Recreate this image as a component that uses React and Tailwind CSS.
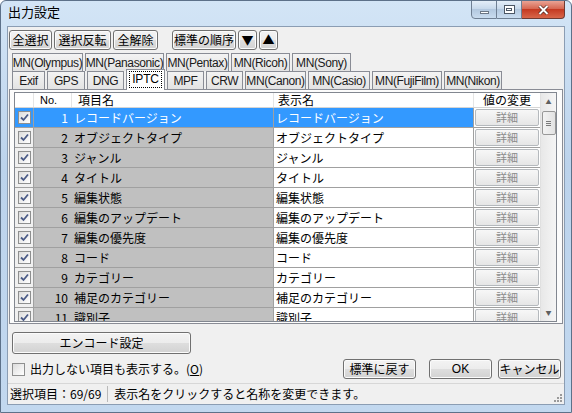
import React from "react";

const F = { fontFamily: '"Noto Sans CJK JP", "Noto Sans", sans-serif' };
const L = { fontFamily: '"Liberation Sans", "Noto Sans CJK JP", sans-serif' };

function Btn({ w, h = 20, children, className = "", style }) {
  return (
    <div
      className={`flex items-center justify-center border border-[#707070] rounded-[3px] bg-[linear-gradient(#f3f3f3_0%,#ececec_50%,#dedede_50%,#d2d2d2_100%)] text-[12px] text-black leading-none shadow-[inset_0_0_0_1px_#fbfbfb] ${className}`}
      style={{ width: w, height: h, ...style }}
    >
      {children}
    </div>
  );
}

function Check({ checked = true }) {
  return (
    <div className="w-[13px] h-[13px] border border-[#8e8f8f] bg-[linear-gradient(135deg,#dcdcdc,#ffffff)] flex items-center justify-center shrink-0">
      {checked && (
        <svg width="9" height="9" viewBox="0 0 9 9">
          <path d="M1 4.5 L3.5 7 L8 1.5" fill="none" stroke="#4a5a86" strokeWidth="1.8" />
        </svg>
      )}
    </div>
  );
}

function Tab({ w, children, selected }) {
  if (selected) {
    return (
      <div
        className="h-[21px] -mt-[3px] -mb-px relative z-10 border border-b-0 border-[#898c95] bg-white flex items-start justify-center pt-[1px] text-[12px] leading-none tracking-[-0.2px]"
        style={{ ...L, width: w }}
      >
        <span className="border border-dotted border-black px-[2px] pt-[1px] pb-[2px]">{children}</span>
      </div>
    );
  }
  return (
    <div
      className="h-[18px] border border-b-0 border-[#898c95] bg-[linear-gradient(#f3f3f3,#e3e3e3)] flex items-center justify-center text-[12px] leading-none text-[#1a1a1a] tracking-[-0.4px]"
      style={{ ...L, width: w }}
    >
      {children}
    </div>
  );
}

const rows = [
  "レコードバージョン",
  "オブジェクトタイプ",
  "ジャンル",
  "タイトル",
  "編集状態",
  "編集のアップデート",
  "編集の優先度",
  "コード",
  "カテゴリー",
  "補足のカテゴリー",
  "識別子",
];

function Detail() {
  return (
    <div className="w-[64px] h-[17px] border border-[#b5b9bd] rounded-[2px] bg-[linear-gradient(#f7f7f7,#e6e6e6)] flex items-center justify-center text-[11px] text-[#8b8b8b] leading-none">
      詳細
    </div>
  );
}

export default function App() {
  return (
    <div
      style={F}
      className="w-[572px] h-[413px] bg-[linear-gradient(#d3e5f6,#bcd3ec_40%,#c2d8ef)] border border-[#5d7189] rounded-t-[6px] flex flex-col overflow-hidden relative"
    >
      {/* title bar */}
      <div className="h-[25px] flex items-start shrink-0">
        <div className="pl-[7px] pt-[4px] text-[13px] text-black leading-none">出力設定</div>
        <div className="ml-auto mr-[6px] flex -mt-px">
          <div className="w-[26px] h-[19px] border border-[#6f7f93] rounded-bl-[4px] bg-[linear-gradient(#e4eef8,#c5d7ea_50%,#b3c8df_50%,#c9dcef)] flex items-center justify-center">
            <div className="w-[9px] h-[3px] border border-[#6c7785] bg-white mt-[5px]" />
          </div>
          <div className="w-[25px] h-[19px] border border-l-0 border-[#6f7f93] bg-[linear-gradient(#e4eef8,#c5d7ea_50%,#b3c8df_50%,#c9dcef)] flex items-center justify-center">
            <div className="w-[11px] h-[9px] border border-[#4c5765] bg-white flex items-center justify-center">
              <div className="w-[6px] h-[3px] border border-[#4c5765]" />
            </div>
          </div>
          <div className="w-[43px] h-[19px] border border-l-0 border-[#6f3a32] rounded-br-[4px] bg-[linear-gradient(#e9a394,#d4614b_50%,#c43a22_50%,#d8664a)] flex items-center justify-center">
            <svg width="11" height="10" viewBox="0 0 11 10">
              <path d="M1.5 1 L9.5 9 M9.5 1 L1.5 9" stroke="#3c1a14" strokeWidth="3.2" />
              <path d="M1.5 1 L9.5 9 M9.5 1 L1.5 9" stroke="#ffffff" strokeWidth="2" />
            </svg>
          </div>
        </div>
      </div>

      {/* client */}
      <div className="mx-[6px] flex-1 bg-[#f0f0f0] border border-[#8b9db3] flex flex-col">
        {/* toolbar */}
        <div className="flex pl-[1px] pt-[3px] gap-[2px]">
          <Btn w={43}>全選択</Btn>
          <Btn w={57}>選択反転</Btn>
          <Btn w={45}>全解除</Btn>
          <Btn w={64} className="ml-[12px]">標準の順序</Btn>
          <Btn w={19} className="text-[10px]">▼</Btn>
          <Btn w={19} className="text-[10px]">▲</Btn>
        </div>

        {/* tabs */}
        <div className="flex pl-[4px] mt-[3px] gap-[2px]">
          <Tab w={71}>MN(Olympus)</Tab>
          <Tab w={79}>MN(Panasonic)</Tab>
          <Tab w={63}>MN(Pentax)</Tab>
          <Tab w={59}>MN(Ricoh)</Tab>
          <Tab w={59}>MN(Sony)</Tab>
        </div>
        <div className="flex pl-[4px] gap-[2px] items-end">
          <Tab w={33}>Exif</Tab>
          <Tab w={38}>GPS</Tab>
          <Tab w={37}>DNG</Tab>
          <Tab w={39} selected>IPTC</Tab>
          <Tab w={37}>MPF</Tab>
          <Tab w={37}>CRW</Tab>
          <Tab w={61}>MN(Canon)</Tab>
          <Tab w={62}>MN(Casio)</Tab>
          <Tab w={70}>MN(FujiFilm)</Tab>
          <Tab w={58}>MN(Nikon)</Tab>
        </div>

        {/* panel */}
        <div className="mx-[1px] h-[235px] border border-[#898c95] bg-[#fcfcfc] pl-[4px] pr-[5px] pt-[2px] pb-px">
          <div className="h-full border border-[#828790] bg-white flex overflow-hidden">
            <div className="flex-1 flex flex-col">
              {/* header */}
              <div className="h-[15px] flex text-[12px] leading-none border-b border-[#d5d5d5] shrink-0">
                <div className="w-[19px] border-r border-[#e5e5e5]" />
                <div className="w-[38px] border-r border-[#e5e5e5] pl-[6px] flex items-center text-[11px]" style={L}>No.</div>
                <div className="w-[202px] border-r border-[#e5e5e5] pl-[6px] flex items-center">項目名</div>
                <div className="w-[200px] border-r border-[#e5e5e5] pl-[4px] flex items-center">表示名</div>
                <div className="flex-1 flex items-center justify-center">値の変更</div>
              </div>
              {rows.map((name, i) => {
                const sel = i === 0;
                return (
                  <div key={i} className="h-[20px] flex text-[12px] leading-none shrink-0 border-b border-[#a0a0a0]">
                    <div className={`w-[19px] flex items-center justify-center border-r border-[#a0a0a0] ${sel ? "bg-[#3399ff]" : "bg-[#f0f0f0]"}`}>
                      <Check />
                    </div>
                    <div className={`w-[38px] flex items-center justify-end pr-[4px] ${sel ? "bg-[#3399ff] text-white" : "bg-[#c0c0c0] text-black"}`}>
                      {i + 1}
                    </div>
                    <div className={`w-[202px] flex items-center pl-[2px] border-r border-[#a0a0a0] ${sel ? "bg-[#3399ff] text-white" : "bg-[#c0c0c0] text-black"}`}>
                      {name}
                    </div>
                    <div className={`w-[200px] flex items-center pl-[2px] border-r border-[#a0a0a0] ${sel ? "bg-[#3399ff] text-white" : "bg-white text-black"}`}>
                      {name}
                    </div>
                    <div className="flex-1 flex items-center justify-center bg-white">
                      <Detail />
                    </div>
                  </div>
                );
              })}
            </div>
            {/* scrollbar */}
            <div className="w-[16px] bg-[linear-gradient(90deg,#e8e8e8,#f5f5f5)] border-l border-[#e0e0e0] flex flex-col items-center">
              <div className="h-[17px] flex items-center justify-center text-[6px] text-[#606060]">▲</div>
              <div className="w-[14px] h-[24px] mt-[1px] border border-[#989898] rounded-[2px] bg-[linear-gradient(90deg,#f3f3f3,#e2e2e2)] flex flex-col items-center justify-center gap-[1px]">
                <div className="w-[5px] h-px bg-[#7a7a7a]" />
                <div className="w-[5px] h-px bg-[#7a7a7a]" />
                <div className="w-[5px] h-px bg-[#7a7a7a]" />
              </div>
              <div className="mt-auto h-[17px] flex items-center justify-center text-[6px] text-[#606060]">▼</div>
            </div>
          </div>
        </div>

        {/* encode button */}
        <Btn w={179} h={22} className="ml-[4px] mt-[8px]">エンコード設定</Btn>

        {/* options row */}
        <div className="flex items-center mt-[5px] h-[20px] pl-[4px] pr-[3px]">
          <div className="w-[13px] h-[13px] border border-[#8e8f8f] bg-[linear-gradient(135deg,#dcdcdc,#ffffff)]" />
          <div className="ml-[5px] text-[12px] leading-none">
            出力しない項目も表示する。(<span className="underline">O</span>)
          </div>
          <div className="ml-auto flex">
            <Btn w={73}>標準に戻す</Btn>
            <Btn w={63} className="ml-[13px]" style={L}>OK</Btn>
            <Btn w={63} className="ml-[6px]">キャンセル</Btn>
          </div>
        </div>

        {/* status bar */}
        <div className="mt-[4px] flex-1 border-t border-[#d7d7d7] flex items-center text-[12px] leading-none relative">
          <div className="pl-[2px] pr-[6px]">選択項目：69/69</div>
          <div className="w-px self-stretch my-[2px] bg-[#b9b9b9]" />
          <div className="pl-[6px]">表示名をクリックすると名称を変更できます。</div>
          <div className="absolute right-[2px] bottom-[2px] grid grid-cols-3 gap-px">
            <div className="w-[2px] h-[2px]" /><div className="w-[2px] h-[2px]" /><div className="w-[2px] h-[2px] bg-[#9a9a9a]" />
            <div className="w-[2px] h-[2px]" /><div className="w-[2px] h-[2px] bg-[#9a9a9a]" /><div className="w-[2px] h-[2px] bg-[#9a9a9a]" />
            <div className="w-[2px] h-[2px] bg-[#9a9a9a]" /><div className="w-[2px] h-[2px] bg-[#9a9a9a]" /><div className="w-[2px] h-[2px] bg-[#9a9a9a]" />
          </div>
        </div>
      </div>
      <div className="h-[7px] shrink-0" />
    </div>
  );
}
